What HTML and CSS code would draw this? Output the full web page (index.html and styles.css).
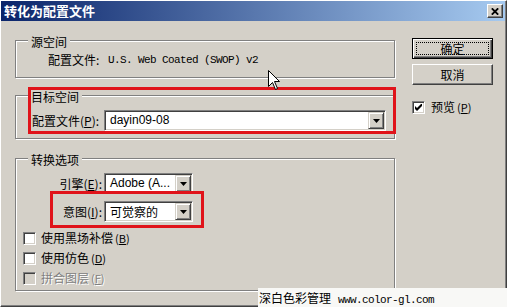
FILE: index.html
```html
<!DOCTYPE html>
<html lang="zh-CN">
<head>
<meta charset="utf-8">
<title>转化为配置文件</title>
<link rel="stylesheet" href="styles.css">
</head>
<body>
<div class="window">
  <div class="titlebar">
    <span class="title">转化为配置文件</span>
    <span class="close-btn"><svg width="8" height="7" viewBox="0 0 8 7"><path d="M0.8 0.3 L7.2 6.7 M7.2 0.3 L0.8 6.7" stroke="#000" stroke-width="1.8"/></svg></span>
  </div>
  <div class="body">
    <div class="left">
      <div class="group g-source">
        <div class="legend">源空间</div>
        <div class="src-row"><span class="src-label">配置文件:</span><span class="mono">U.S. Web Coated (SWOP) v2</span></div>
      </div>
      <div class="group g-target">
        <div class="legend">目标空间</div>
        <div class="field-row">
          <span class="label">配置文件(<u>P</u>):</span>
          <div class="select wide"><span class="value latin">dayin09-08</span><span class="drop"><svg width="7" height="4" viewBox="0 0 7 4"><path d="M0 0h7L3.5 4z" fill="#000"/></svg></span></div>
        </div>
        <div class="mark mark-target"></div>
      </div>
      <div class="group g-convert">
        <div class="legend">转换选项</div>
        <div class="opt-rows">
          <div class="opt-row">
            <span class="opt-label">引擎(<u>E</u>):</span>
            <div class="select narrow"><span class="value latin">Adobe (A...</span><span class="drop"><svg width="7" height="4" viewBox="0 0 7 4"><path d="M0 0h7L3.5 4z" fill="#000"/></svg></span></div>
          </div>
          <div class="opt-row">
            <span class="opt-label">意图(<u>I</u>):</span>
            <div class="select narrow"><span class="value">可觉察的</span><span class="drop"><svg width="7" height="4" viewBox="0 0 7 4"><path d="M0 0h7L3.5 4z" fill="#000"/></svg></span></div>
          </div>
        </div>
        <div class="checks">
          <div class="check"><span class="box"></span><span class="ctext">使用黑场补偿<span class="mn">(<u>B</u>)</span></span></div>
          <div class="check"><span class="box"></span><span class="ctext">使用仿色<span class="mn">(<u>D</u>)</span></span></div>
          <div class="check disabled"><span class="box"></span><span class="ctext">拼合图层<span class="mn">(<u>F</u>)</span></span></div>
        </div>
        <div class="mark mark-intent"></div>
      </div>
    </div>
    <div class="right">
      <button class="btn default">确定</button>
      <button class="btn">取消</button>
      <div class="check preview"><span class="box"><svg width="7" height="7" viewBox="0 0 7 7"><path d="M0 2 L2 4 L7 -1 L7 2 L2 7 L0 5z" fill="#000"/></svg></span><span class="ctext">预览<span class="mn">(<u>P</u>)</span></span></div>
    </div>
  </div>
  <svg class="cursor" width="13" height="21" viewBox="0 0 13 21"><path d="M0.5 0.5 L0.5 16.5 L4.5 12.5 L7.5 19.5 L9.5 18.5 L6.5 11.5 L11.5 11.5 Z" fill="#fff" stroke="#000" stroke-width="1" stroke-linejoin="miter"/></svg>
  <div class="watermark">深白色彩管理<span class="mono">www.color-gl.com</span></div>
</div>
</body>
</html>
```
FILE: styles.css
```css
* { box-sizing: border-box; }
html, body { margin: 0; padding: 0; }
body {
  width: 507px;
  height: 307px;
  overflow: hidden;
  background: #d4d0c8;
  font-family: "Noto Sans CJK SC", "Liberation Sans", sans-serif;
  font-size: 12px;
  color: #000;
}
.window {
  position: relative;
  width: 507px;
  height: 307px;
  background: #d4d0c8;
  border: 1px solid;
  border-color: #fff #404040 #404040 #fff;
  box-shadow: inset -1px -1px 0 #808080;
  padding: 0 1px 1px 0;
}
.titlebar {
  height: 20px;
  display: flex;
  align-items: center;
  justify-content: space-between;
  background: linear-gradient(to right, #0a246a, #a6caf0);
  padding: 0 2px 0 3px;
}
.title {
  color: #fff;
  font-weight: bold;
  font-size: 13px;
  line-height: 20px;
}
.close-btn {
  width: 16px;
  height: 14px;
  background: #d4d0c8;
  border: 1px solid;
  border-color: #fff #404040 #404040 #fff;
  box-shadow: inset -1px -1px 0 #808080;
  display: flex;
  align-items: center;
  justify-content: center;
}
.body {
  display: flex;
  align-items: flex-start;
  gap: 16px;
  padding: 19px 0 0 14px;
}
.left { width: 381px; flex: none; }
.right {
  width: 81px;
  flex: none;
  margin-top: -2px;
  display: flex;
  flex-direction: column;
}
.group {
  position: relative;
  width: 380px;
  border: 1px solid #808080;
  box-shadow: inset 1px 1px 0 #fff, 1px 1px 0 #fff;
}
.legend {
  width: fit-content;
  margin: -6px 0 0 12px;
  padding: 0 3px;
  background: #d4d0c8;
  line-height: 14px;
}
.g-source { padding-bottom: 10px; }
.g-target { margin-top: 17px; padding-bottom: 7px; }
.g-convert { margin-top: 19px; padding-bottom: 2px; }
.src-row {
  margin: 4px 0 0 32px;
  line-height: 14px;
  display: flex;
  align-items: center;
}
.src-label { width: 60px; flex: none; }
.mono {
  font-family: "Liberation Mono", "DejaVu Sans Mono", monospace;
  font-size: 11px;
  letter-spacing: -0.6px;
  white-space: nowrap;
}
.latin { font-family: "Liberation Sans", Arial, sans-serif; font-size: 12px; }
.field-row {
  display: flex;
  align-items: center;
  margin: 6px 0 0 16px;
}
.label {
  width: 72px;
  flex: none;
  line-height: 14px;
  white-space: nowrap;
}
.opt-rows {
  display: flex;
  flex-direction: column;
  gap: 7px;
  margin-top: 6px;
}
.opt-row {
  display: flex;
  align-items: center;
  gap: 2px;
}
.opt-label {
  width: 86px;
  flex: none;
  text-align: right;
  line-height: 14px;
  white-space: nowrap;
}
.select {
  display: flex;
  flex: none;
  height: 21px;
  background: #fff;
  border: 1px solid;
  border-color: #808080 #fff #fff #808080;
  box-shadow: inset 1px 1px 0 #404040, inset -1px -1px 0 #d4d0c8;
  padding: 1px;
}
.select.wide { width: 282px; }
.select.narrow { width: 89px; }
.value {
  flex: 1;
  min-width: 0;
  padding-left: 4px;
  line-height: 17px;
  white-space: nowrap;
  overflow: hidden;
}
.drop {
  width: 16px;
  height: 17px;
  flex: none;
  background: #d4d0c8;
  border: 1px solid;
  border-color: #d4d0c8 #404040 #404040 #d4d0c8;
  box-shadow: inset 1px 1px 0 #fff, inset -1px -1px 0 #808080;
  display: flex;
  align-items: center;
  justify-content: center;
}
.checks { margin: 6px 0 0 7px; }
.check {
  display: flex;
  align-items: center;
  gap: 5px;
  height: 20px;
  line-height: 14px;
}
.ctext { white-space: nowrap; }
.box {
  width: 13px;
  height: 13px;
  background: #fff;
  border: 1px solid;
  border-color: #808080 #fff #fff #808080;
  box-shadow: inset 1px 1px 0 #404040, inset -1px -1px 0 #d4d0c8;
  display: flex;
  align-items: center;
  justify-content: center;
  flex: none;
}
.mn { margin-left: 2px; font-size: 11px; }
.check.disabled { color: #808080; text-shadow: 1px 1px 0 #fff; }
.check.disabled .box { background: #d4d0c8; }
.btn {
  width: 81px;
  height: 21px;
  padding: 0;
  font: inherit;
  font-size: 12px;
  line-height: 17px;
  color: #000;
  background: #d4d0c8;
  border: 1px solid;
  border-color: #fff #404040 #404040 #fff;
  box-shadow: inset -1px -1px 0 #808080;
}
.btn + .btn { margin-top: 5px; }
.btn.default {
  border-color: #000;
  box-shadow: inset 1px 1px 0 #fff, inset -1px -1px 0 #404040, inset -2px -2px 0 #808080;
  outline: 1px dotted #000;
  outline-offset: -5px;
}
.preview { margin-top: 12px; gap: 6px; }
.mark {
  position: absolute;
  border: 3px solid #e0131a;
  pointer-events: none;
}
.mark-target { left: 12px; top: -9px; width: 368px; height: 47px; }
.mark-intent { left: 34px; top: 32px; width: 154px; height: 37px; }
.cursor { position: absolute; left: 267px; top: 69px; }
.watermark {
  position: absolute;
  right: -2px;
  bottom: -2px;
  width: 250px;
  height: 20px;
  background: #f8f8f6;
  padding-left: 1px;
  line-height: 20px;
  font-size: 12px;
  white-space: nowrap;
}
.watermark .mono { margin-left: 7px; }
```
